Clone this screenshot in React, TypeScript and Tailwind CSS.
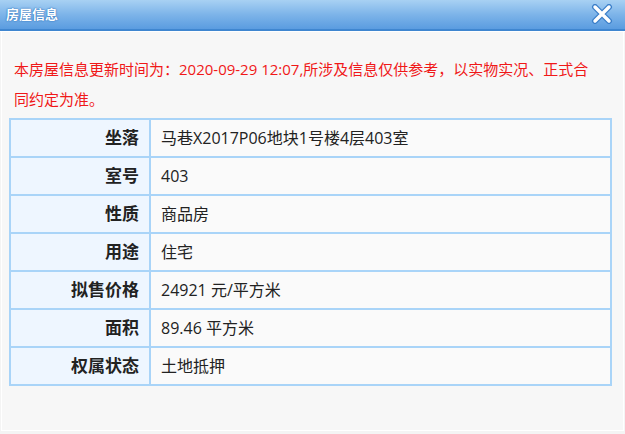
import React from "react";

const rows: [string, string][] = [
  ["坐落", "马巷X2017P06地块1号楼4层403室"],
  ["室号", "403"],
  ["性质", "商品房"],
  ["用途", "住宅"],
  ["拟售价格", "24921 元/平方米"],
  ["面积", "89.46 平方米"],
  ["权属状态", "土地抵押"],
];

export default function App() {
  return (
    <div
      className="w-[625px] h-[434px] flex flex-col bg-[#f4f4f4] overflow-hidden"
      style={{ fontFamily: '"Open Sans", "Noto Sans CJK SC", sans-serif' }}
    >
      <div className="h-[31px] shrink-0 flex items-center justify-between pl-[6px] pr-[12px] bg-gradient-to-b from-[#a8d1f3] via-[#7db4e9] to-[#5a9ce0] border-b-2 border-[#3f86d0]">
        <span className="text-white font-bold text-[13px] leading-none [text-shadow:0_0_2px_#2f73bd,0_0_1px_#2f73bd]">
          房屋信息
        </span>
        <svg width="22" height="20" viewBox="0 0 22 20" className="mt-[-2px]">
          <path d="M4 3 L18 17 M18 3 L4 17" stroke="#3b7fc9" strokeWidth="6" strokeLinecap="round" />
          <path d="M4 3 L18 17 M18 3 L4 17" stroke="#ffffff" strokeWidth="3.4" strokeLinecap="round" />
        </svg>
      </div>
      <div className="h-[1px] bg-white shrink-0" />
      <div className="flex-1 mx-[1px] mb-[3px] bg-[#f7f7f7] border-l border-r border-b border-white flex flex-col">
        <div className="pl-[12px] pr-[10px] pt-[22px] text-[15px] leading-[30px] text-[#f01818]">
          本房屋信息更新时间为：2020-09-29 12:07,所涉及信息仅供参考，以实物实况、正式合
          <br />
          同约定为准。
        </div>
        <div className="ml-[7px] mt-[4px] w-[603px] border-t-2 border-l-2 border-[#a9d4f8] grid grid-cols-[140px_1fr]">
          {rows.map(([k, v]) => (
            <React.Fragment key={k}>
              <div className="h-[38px] flex items-center justify-end pr-[10px] bg-[#eef6ff] border-r-2 border-b-2 border-[#a9d4f8] text-[17px] font-bold text-[#222]">
                {k}
              </div>
              <div className="h-[38px] flex items-center pl-[10px] bg-[#fafafa] border-r-2 border-b-2 border-[#a9d4f8] text-[16px] text-[#222]">
                {v}
              </div>
            </React.Fragment>
          ))}
        </div>
      </div>
    </div>
  );
}
